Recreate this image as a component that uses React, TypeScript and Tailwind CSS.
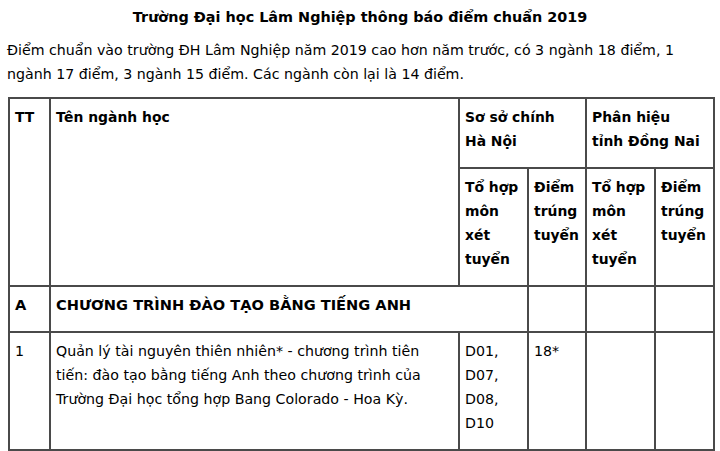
export default function App() {
  const cell = 'border-2 border-[#4a4a4a] align-top pl-[5px] pr-[4px] pt-[6px] pb-[14px] text-left'

  return (
    <div className="w-[720px] h-[451px] overflow-hidden bg-white text-black font-['DejaVu_Sans',sans-serif] text-[14.2px] leading-[24px]">
      {/* Title */}
      <h1 className="pt-[5px] text-center font-bold text-[14.4px]">Trường Đại học Lâm Nghiệp thông báo điểm chuẩn 2019</h1>

      {/* Intro */}
      <p className="pl-[7px] pt-[9px]">
        Điểm chuẩn vào trường ĐH Lâm Nghiệp năm 2019 cao hơn năm trước, có 3 ngành 18 điểm, 1
        <br />
        ngành 17 điểm, 3 ngành 15 điểm. Các ngành còn lại là 14 điểm.
      </p>

      {/* Score table */}
      <table className="ml-[8px] mt-[11px] w-[705px] border-collapse table-fixed">
        <colgroup>
          <col className="w-[41px]" />
          <col className="w-[409px]" />
          <col className="w-[69px]" />
          <col className="w-[58px]" />
          <col className="w-[69px]" />
          <col className="w-[59px]" />
        </colgroup>
        <tbody>
          <tr>
            <th rowSpan={2} className={`${cell} text-[13.9px]`}>TT</th>
            <th rowSpan={2} className={`${cell} text-[13.9px]`}>Tên ngành học</th>
            <th colSpan={2} className={`${cell} text-[13.9px]`}>
              Sơ sở chính
              <br />
              Hà Nội
            </th>
            <th colSpan={2} className={`${cell} text-[13.9px]`}>
              Phân hiệu
              <br />
              tỉnh Đồng Nai
            </th>
          </tr>
          <tr>
            <th className={`${cell} text-[13.9px] whitespace-nowrap`}>
              Tổ hợp
              <br />
              môn
              <br />
              xét
              <br />
              tuyển
            </th>
            <th className={`${cell} text-[13.9px] whitespace-nowrap`}>
              Điểm
              <br />
              trúng
              <br />
              tuyển
            </th>
            <th className={`${cell} text-[13.9px] whitespace-nowrap`}>
              Tổ hợp
              <br />
              môn
              <br />
              xét
              <br />
              tuyển
            </th>
            <th className={`${cell} text-[13.9px] whitespace-nowrap`}>
              Điểm
              <br />
              trúng
              <br />
              tuyển
            </th>
          </tr>
          <tr>
            <td className={`${cell} font-bold text-[14.6px]`}>A</td>
            <td colSpan={2} className={`${cell} font-bold text-[14.6px] whitespace-nowrap`}>
              CHƯƠNG TRÌNH ĐÀO TẠO BẰNG TIẾNG ANH
            </td>
            <td className={cell}></td>
            <td className={cell}></td>
            <td className={cell}></td>
          </tr>
          <tr>
            <td className={cell}>1</td>
            <td className={`${cell} whitespace-nowrap`}>
              Quản lý tài nguyên thiên nhiên* - chương trình tiên
              <br />
              tiến: đào tạo bằng tiếng Anh theo chương trình của
              <br />
              Trường Đại học tổng hợp Bang Colorado - Hoa Kỳ.
            </td>
            <td className={cell}>
              D01,
              <br />
              D07,
              <br />
              D08,
              <br />
              D10
            </td>
            <td className={cell}>18*</td>
            <td className={cell}></td>
            <td className={cell}></td>
          </tr>
        </tbody>
      </table>
    </div>
  )
}
